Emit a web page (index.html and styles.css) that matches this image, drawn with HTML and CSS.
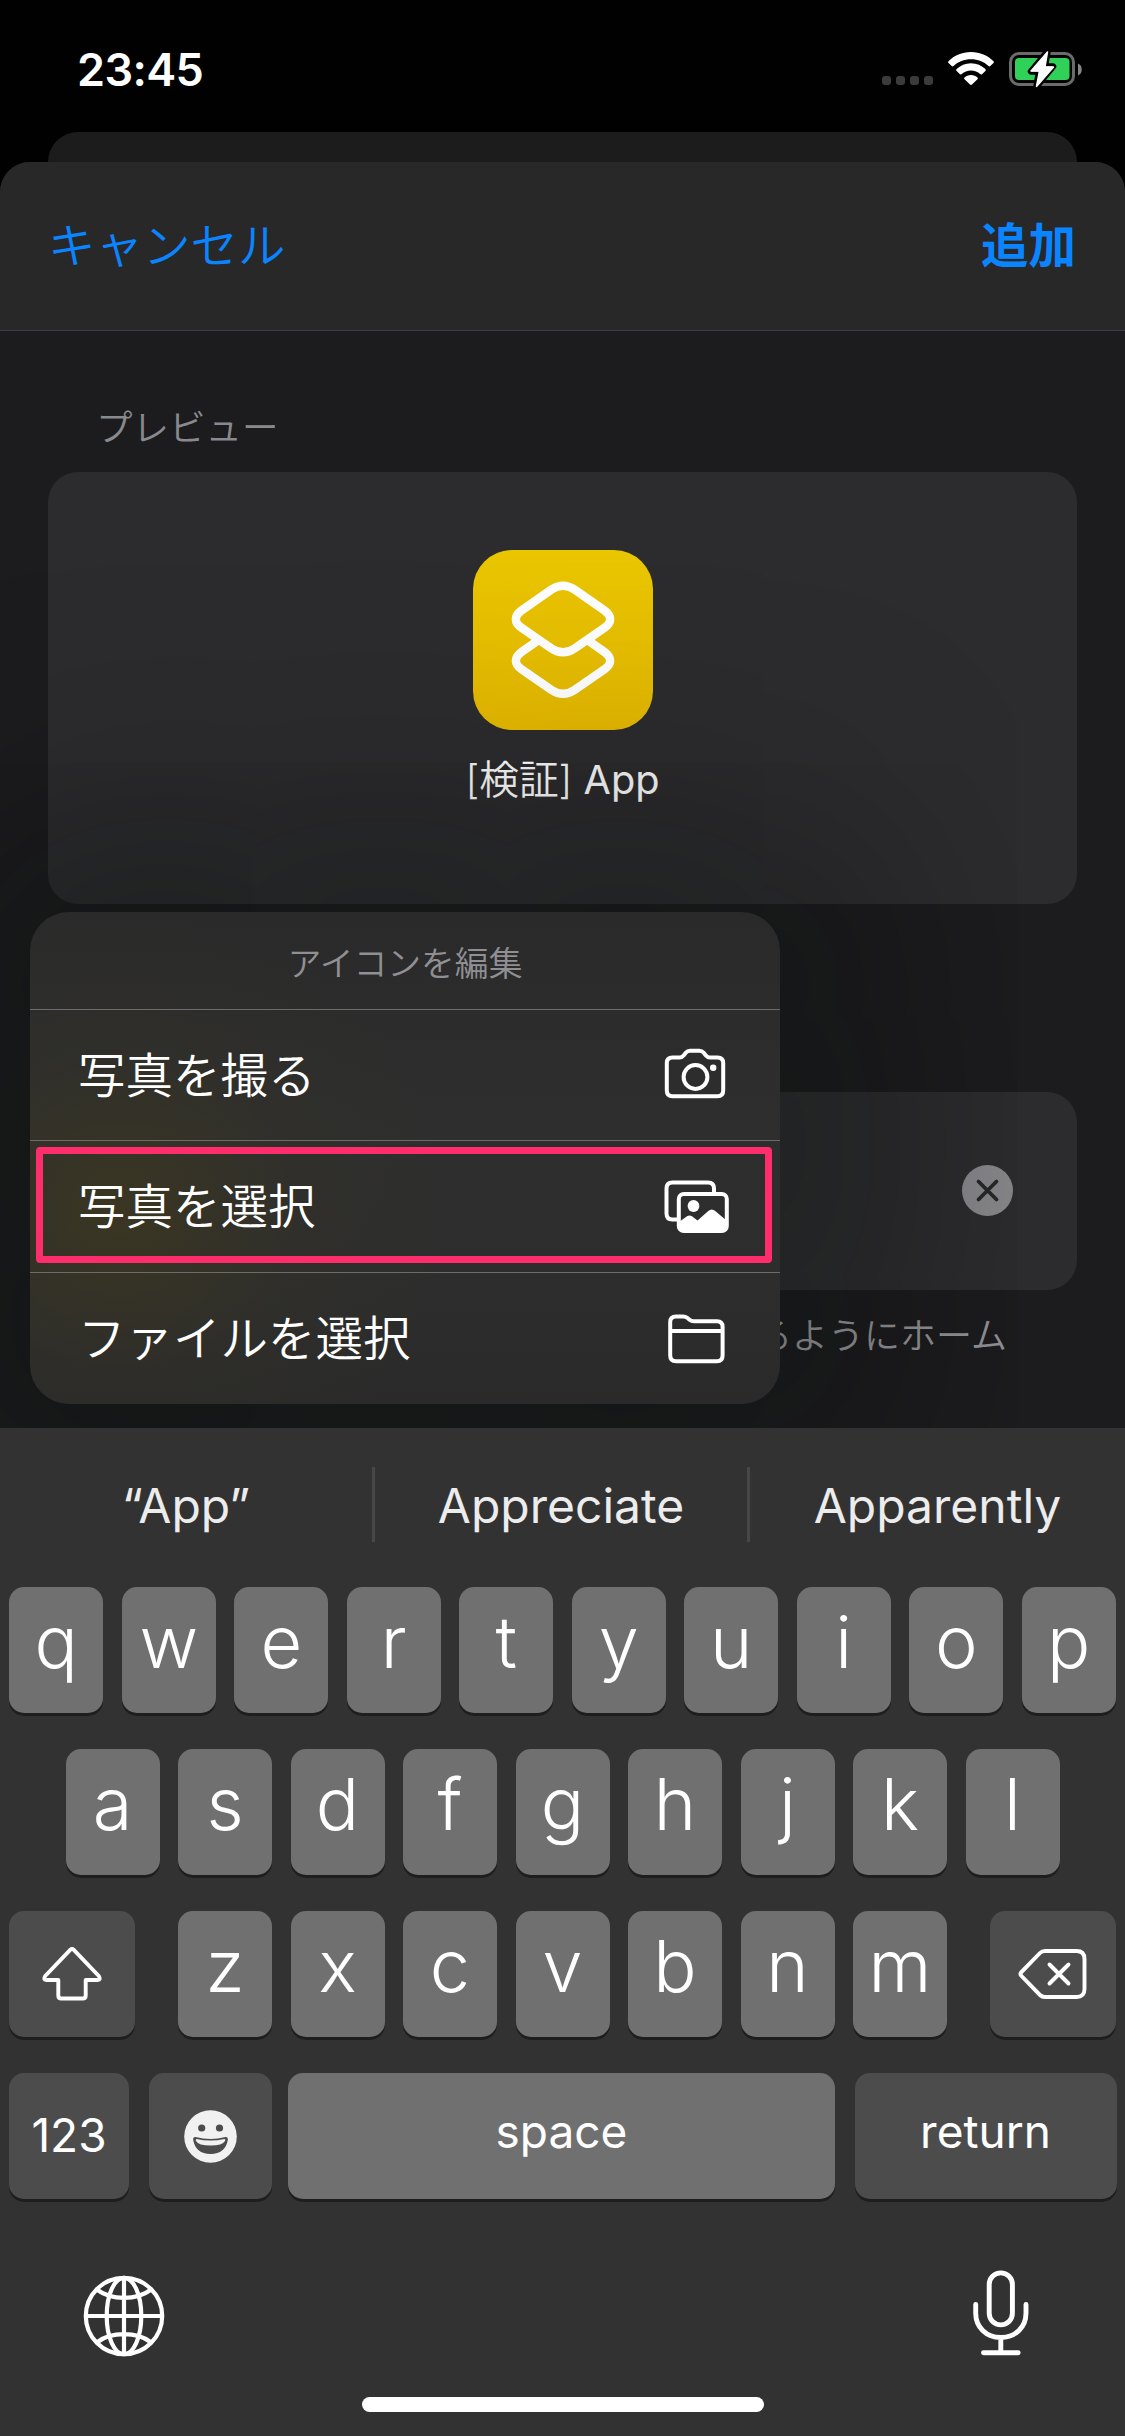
FILE: index.html
```html
<!DOCTYPE html>
<html lang="ja">
<head>
<meta charset="utf-8">
<title>ホーム画面に追加</title>
<link rel="stylesheet" href="styles.css">
</head>
<body>
<div class="phone">
  <header class="status">
    <span class="clock">23:45</span>
    <div class="indicators">
      <span class="dots"><i></i><i></i><i></i><i></i></span>
      <svg class="wifi" width="46" height="34" viewBox="0 0 46 34">
        <g fill="#fff">
          <path d="M23 0C32 0 39.800 3.500 45.500 9.200Q46.300 10 45.500 10.900L42.300 14Q41.500 14.800 40.500 13.900C35.800 9.600 29.800 7.200 23 7.200S10.200 9.600 5.500 13.900Q4.500 14.800 3.700 14L.5 10.900Q-.3 10 .5 9.200C6.200 3.500 14 0 23 0Z"/>
          <path d="M23 11.300C28.700 11.300 33.600 13.500 37.400 17.100Q38.300 18 37.400 18.900L34 22.200Q33.200 23 32.200 22.100C29.700 19.900 26.600 18.600 23 18.600S16.300 19.900 13.800 22.100Q12.800 23 12 22.200L8.600 18.900Q7.700 18 8.600 17.100C12.400 13.500 17.300 11.300 23 11.300Z"/>
          <path d="M23 23C25.600 23 27.900 24 29.500 25.500Q30.400 26.300 29.500 27.200L24 32.600Q23 33.500 22 32.600L16.500 27.200Q15.600 26.300 16.500 25.500C18.100 24 20.400 23 23 23Z"/>
        </g>
      </svg>
      <svg class="battery" width="74" height="38" viewBox="0 0 74 38">
        <rect x="1.500" y="3.500" width="63" height="31" rx="8.500" fill="none" stroke="#6a6b6a" stroke-width="3"/>
        <path d="M69 13.500C74 15 74 24 69 25.500Z" fill="#858685"/>
        <rect x="6" y="8" width="54.500" height="22" rx="4" fill="#30d158"/>
        <path d="M38.500 1.500L22 21.500H30L27.500 36.500L44 16.500H36Z" fill="#fff" stroke="#000" stroke-width="6.500" stroke-linejoin="round" paint-order="stroke"/>
        <path d="M38.500 2L22 21H30.500L27.500 36.500L44.500 17H36Z" fill="#fff" stroke="#fff" stroke-width="1.500" stroke-linejoin="round"/>
      </svg>
    </div>
  </header>
  <div class="back-sheet"></div>

  <main class="sheet">
    <nav class="nav">
      <a class="cancel">キャンセル</a>
      <a class="add">追加</a>
    </nav>
    <section class="form">
      <h2 class="label">プレビュー</h2>
      <div class="preview">
        <svg class="app-icon" width="180" height="180" viewBox="0 0 180 180">
          <g fill="none" stroke="#fff" stroke-width="8.400" stroke-linejoin="round">
            <path d="M78.500 39.500Q90 32 101.500 39.500L131.500 60.500C139 66 139 72.500 131.500 77.800L101.500 98.500Q90 106 78.500 98.500L48.500 77.800C41 72.500 41 66 48.500 60.500Z"/>
            <path d="M66 89.750L48.500 102C41 107.500 41 114 48.500 119.200L78.500 140Q90 147.500 101.500 140L131.500 119.200C139 114 139 107.500 131.500 102L114 89.750"/>
          </g>
        </svg>
        <p class="app-name"><span class="thin">[検証]</span> App</p>
      </div>
      <div class="field">
        <svg width="51" height="51" viewBox="0 0 51 51">
          <circle cx="25.500" cy="25.500" r="25.500" fill="#88888c"/>
          <path d="M16.500 16.500L34.500 34.500M34.500 16.500L16.500 34.500" stroke="#272829" stroke-width="3.800" stroke-linecap="round"/>
        </svg>
      </div>
      <p class="hint">るようにホーム</p>
    </section>

    <div class="menu">
      <p class="menu-title">アイコンを編集</p>
      <div class="item">
        <span>写真を撮る</span>
        <svg width="66" height="54" viewBox="0 0 66 54" fill="none" stroke="#fff" stroke-width="4">
          <path d="M8.500 9.500H15.500Q18 9.500 19.600 7.500L21.800 4.800Q23.500 2.700 26 2.700H35.500Q38 2.700 39.700 4.800L41.900 7.500Q43.500 9.500 46 9.500H53.500Q59.200 9.500 59.200 15V42.500Q59.200 48.200 53.500 48.200H8.500Q2.800 48.200 2.800 42.500V15Q2.800 9.500 8.500 9.500Z"/>
          <circle cx="31.500" cy="29" r="11.900"/>
          <circle cx="49.200" cy="19.800" r="3.200" fill="#fff" stroke="none"/>
        </svg>
      </div>
      <div class="item picked">
        <span>写真を選択</span>
        <svg width="66" height="54" viewBox="0 0 66 54">
          <path d="M15 39.500H8.500Q2.500 39.500 2.500 33.500V8.500Q2.500 2.500 8.500 2.500H44Q50 2.500 50 8.500V13" fill="none" stroke="#fff" stroke-width="4"/>
          <rect x="14.800" y="14" width="48" height="37" rx="5" fill="none" stroke="#fff" stroke-width="4"/>
          <circle cx="29.500" cy="26" r="5.900" fill="#fff"/>
          <path d="M15 42L23 36.300Q25.500 34.500 28 36.300L33.500 40.500L44 31.200Q47.800 28 51.500 31.200L62.500 40.500V51H15Z" fill="#fff"/>
        </svg>
      </div>
      <div class="item">
        <span>ファイルを選択</span>
        <svg width="66" height="54" viewBox="0 -1 66 54" fill="none" stroke="#fff" stroke-width="4">
          <path d="M12 3.500H19Q21.500 3.500 23.500 5L25.500 6.700Q27.500 8.300 30 8.300H53Q58.600 8.300 58.600 14V42.500Q58.600 48.200 53 48.200H12Q6.200 48.200 6.200 42.500V9.200Q6.200 3.500 12 3.500ZM6.200 18H58.600"/>
        </svg>
      </div>
    </div>
  </main>

  <section class="keyboard">
    <div class="suggestions">
      <span>“App”</span><span>Appreciate</span><span>Apparently</span>
    </div>
    <div class="keys">
      <div class="row"><b>q</b><b>w</b><b>e</b><b>r</b><b>t</b><b>y</b><b>u</b><b>i</b><b>o</b><b>p</b></div>
      <div class="row"><b>a</b><b>s</b><b>d</b><b>f</b><b>g</b><b>h</b><b>j</b><b>k</b><b>l</b></div>
      <div class="row spread">
        <b class="dark shift">
          <svg width="62" height="56" viewBox="0 0 62 56"><path d="M29.200 3.800Q31 2 32.800 3.800L57.800 30Q60.300 33.800 56.500 34H44.700V49.500Q44.700 52.500 41.700 52.500H20.300Q17.300 52.500 17.300 49.500V34H5.500Q1.700 33.800 4.200 30Z" fill="none" stroke="#fff" stroke-width="3.900" stroke-linejoin="round"/></svg>
        </b>
        <div class="letters"><b>z</b><b>x</b><b>c</b><b>v</b><b>b</b><b>n</b><b>m</b></div>
        <b class="dark delete">
          <svg width="70" height="52" viewBox="0 0 70 52" fill="none" stroke="#fff" stroke-width="3.900" stroke-linejoin="round" stroke-linecap="round"><path d="M27 3H58.500Q66.500 3 66.500 11V41Q66.500 49 58.500 49H27Q24 49 22 47L3.500 28Q1.500 26 3.500 24L22 5Q24 3 27 3Z"/><path d="M31.500 16.500L50.500 35.500M50.500 16.500L31.500 35.500"/></svg>
        </b>
      </div>
      <div class="bottom-row">
        <b class="dark small digits">123</b>
        <b class="dark">
          <svg width="53" height="53" viewBox="0 0 53 53">
            <circle cx="26.500" cy="26.500" r="26.300" fill="#f1f1f1"/>
            <circle cx="17.700" cy="18" r="3.600" fill="#4c4c4c"/><circle cx="35.500" cy="18" r="3.600" fill="#4c4c4c"/>
            <path d="M11.500 27Q26.500 30.800 41.500 27Q44 26.500 43.900 29.500Q41.500 44 26.500 44T9.100 29.500Q9 26.500 11.500 27Z" fill="#4c4c4c"/>
            <path d="M12.500 29Q26.500 32 40.500 29Q41.800 29 41 31Q38.500 35.600 26.500 35.600T12 31Q11.200 29 12.500 29Z" fill="#f1f1f1"/>
          </svg>
        </b>
        <b class="small">space</b>
        <b class="dark small">return</b>
      </div>
    </div>
    <div class="tools">
      <svg class="globe" width="82" height="82" viewBox="0 0 82 82" fill="none" stroke="#fff" stroke-width="4.200">
        <circle cx="41" cy="41" r="38.200"/>
        <ellipse cx="41" cy="41" rx="17.300" ry="38.200"/>
        <path d="M41 3V79M3 41H79M14.500 15Q25 22.800 41 22.800T67.500 15M14.500 67Q25 59.200 41 59.200T67.500 67"/>
      </svg>
      <svg width="58" height="86" viewBox="0 0 58 86" fill="none" stroke="#fff" stroke-width="4.900" stroke-linecap="round">
        <rect x="16.200" y="2.900" width="23.200" height="52" rx="11.600"/>
        <path d="M2.700 34.500V43C2.700 57 13 67.500 27.800 67.500S53 57 53 43V34.500M27.800 67.500V82.500M10.500 82.700H45.200"/>
      </svg>
    </div>
    <div class="home"></div>
  </section>
</div>
</body>
</html>
```

FILE: styles.css
```css
*, *::after { box-sizing: border-box; margin: 0; padding: 0; }

body {
  background: #000;
  font-family: "Inter", "Noto Sans CJK JP", sans-serif;
  font-weight: 400;
  color: #fff;
}

svg { display: block; flex: none; }

.phone {
  width: 1125px;
  height: 2436px;
  display: flex;
  flex-direction: column;
  overflow: hidden;
  background: #000100;
}

/* Status bar */
.status {
  height: 132px;
  padding: 6px 42px 0 77px;
  display: flex;
  align-items: center;
  justify-content: space-between;
}
.clock { font-size: 45px; font-weight: 600; letter-spacing: -.6px; }
.indicators { display: flex; align-items: flex-start; }
.dots { display: flex; gap: 5px; margin: 26px 15px 0 0; }
.dots i { width: 9px; height: 9px; border-radius: 3px; background: #3b3c3a; }
.wifi { margin: 2px 15px 0 0; }

/* Sheets */
.back-sheet {
  height: 30px;
  margin: 0 48px;
  border-radius: 30px 30px 0 0;
  background: #1c1c1c;
}
.sheet {
  position: relative;
  height: 1266px;
  border-radius: 30px 30px 0 0;
  background: #1c1c1e;
}
.nav {
  height: 169px;
  padding: 0 49px 8px 48px;
  display: flex;
  align-items: center;
  justify-content: space-between;
  border-radius: 30px 30px 0 0;
  border-bottom: 1px solid #3f3f41;
  background: #282828;
  color: #0a84ff;
  font-size: 47.500px;
}
.cancel { font-weight: 350; }
.add { font-weight: 700; }

.form { padding: 70px 48px 0; }
.label {
  height: 71px;
  padding-left: 48px;
  font-size: 36.500px;
  font-weight: 350;
  line-height: 54px;
  color: #8a8a8e;
}
.preview {
  height: 432px;
  padding-top: 78px;
  display: flex;
  flex-direction: column;
  align-items: center;
  border-radius: 30px;
  background: #2c2c2e;
}
.app-icon { border-radius: 39px; background: linear-gradient(#e9c600, #e5b800); }
.app-name {
  margin-top: 20px;
  font-size: 39.700px;
  line-height: 60px;
}
.thin { font-weight: 350; }
.field {
  height: 198px;
  margin-top: 188px;
  padding: 0 64px 2px 0;
  display: flex;
  align-items: center;
  justify-content: flex-end;
  border-radius: 30px;
  background: #2c2c2e;
}
.hint {
  margin-top: 19px;
  padding-right: 70px;
  font-size: 36px;
  font-weight: 350;
  line-height: 54px;
  text-align: right;
  color: #929296;
}

/* Context menu floating over the sheet */
.menu {
  position: absolute;
  left: 30px;
  top: 750px;
  width: 750px;
  height: 492px;
  border-radius: 39px;
  background:
    radial-gradient(ellipse 330px 300px at 90px 300px, rgba(62, 57, 30, .75), rgba(52, 50, 38, .3) 55%, transparent),
    linear-gradient(#2a2a2a, #2e2e2e 45%, #2d2d2d 75%, #2a2a2a);
  box-shadow: 0 0 240px 100px rgba(0, 6, 0, .33);
}
.menu-title {
  height: 97px;
  font-size: 33.800px;
  font-weight: 350;
  line-height: 103px;
  text-align: center;
  color: #909094;
}
.item {
  height: 132px;
  padding: 0 50px 0 48px;
  display: flex;
  align-items: center;
  justify-content: space-between;
  border-top: 1px solid #6c6c6a;
  font-size: 47.500px;
  font-weight: 350;
}
.item span { padding-bottom: 6px; }
.menu-title + .item { height: 131px; }
.picked { position: relative; }
.picked::after {
  content: "";
  position: absolute;
  left: 6px;
  top: 6px;
  width: 736px;
  height: 116px;
  border: 7px solid #ff2d6b;
  border-radius: 4px;
}

/* Keyboard */
.keyboard {
  position: relative;
  height: 1008px;
  background: #323232;
}
.suggestions {
  height: 159px;
  padding-top: 39px;
  display: flex;
}
.suggestions span {
  flex: 0 0 375px;
  height: 75px;
  border-right: 3px solid #464746;
  font-size: 48px;
  line-height: 77px;
  text-align: center;
  color: #ececec;
}
.suggestions span:last-child { border-right: 0; }
.keys {
  padding: 0 9px;
  display: flex;
  flex-direction: column;
  gap: 36px;
}
.keys b {
  width: 94px;
  height: 126px;
  padding-bottom: 16px;
  border-radius: 15px;
  background: #707070;
  box-shadow: 0 3px 0 #1e1e1e;
  font-size: 72px;
  font-weight: 300;
  line-height: 110px;
  text-align: center;
}
.row, .letters { display: flex; justify-content: center; gap: 18.500px; }
.spread { justify-content: space-between; gap: 0; }
.keys .dark {
  display: flex;
  align-items: center;
  justify-content: center;
  padding: 0;
  background: #4c4c4c;
}
.keys .shift, .keys .delete { width: 126px; }
.bottom-row {
  display: grid;
  grid-template-columns: 120px 123px 547px 262px;
  column-gap: 18.500px;
}
.bottom-row b { width: auto; }
.keys .bottom-row b:nth-child(2) { margin: 0 -1px 0 1px; }
.keys .small {
  padding: 0 0 10px;
  font-size: 46px;
  font-weight: 400;
  line-height: 116px;
}
.keys .digits { padding-bottom: 2px; }
.bottom-row b:nth-child(3) { margin: 0 1px 0 -1px; }
.tools {
  height: 198px;
  padding: 71px 94px 0 83px;
  display: flex;
  justify-content: space-between;
}
.globe { margin-top: 5px; }
.home {
  width: 402px;
  height: 15px;
  margin: 0 auto;
  border-radius: 8px;
  background: #fff;
}
```
